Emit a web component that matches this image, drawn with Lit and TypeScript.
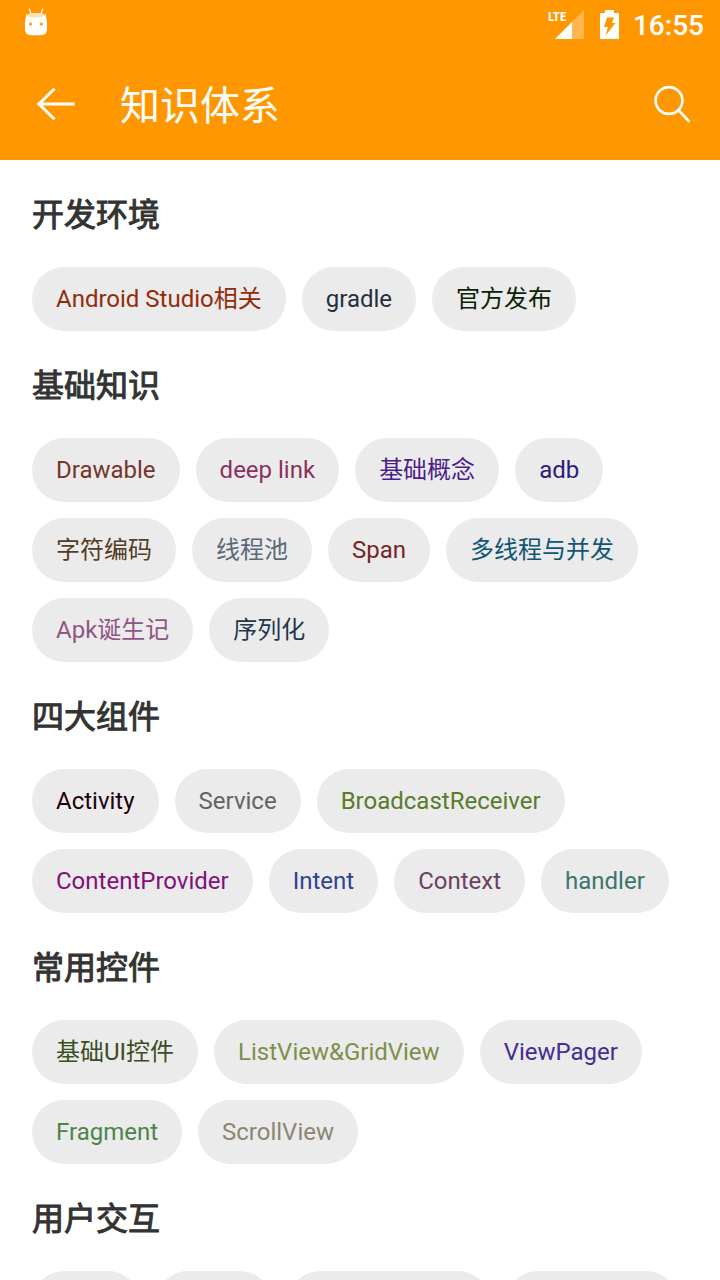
import { LitElement, html, css, svg } from "lit";
import { customElement, property } from "lit/decorators.js";
import { styleMap } from "lit/directives/style-map.js";

interface Tag {
  label: string;
  color: string;
}

interface Section {
  title: string;
  tags: Tag[];
}

const SECTIONS: Section[] = [
  {
    title: "开发环境",
    tags: [
      { label: "Android Studio相关", color: "#932b0a" },
      { label: "gradle", color: "#25303f" },
      { label: "官方发布", color: "#0c2003" },
    ],
  },
  {
    title: "基础知识",
    tags: [
      { label: "Drawable", color: "#76342a" },
      { label: "deep link", color: "#8b2f63" },
      { label: "基础概念", color: "#4b1d8f" },
      { label: "adb", color: "#2d1a7d" },
      { label: "字符编码", color: "#543c25" },
      { label: "线程池", color: "#5b6978" },
      { label: "Span", color: "#782428" },
      { label: "多线程与并发", color: "#105574" },
      { label: "Apk诞生记", color: "#905584" },
      { label: "序列化", color: "#1f3750" },
    ],
  },
  {
    title: "四大组件",
    tags: [
      { label: "Activity", color: "#1e0210" },
      { label: "Service", color: "#5f6468" },
      { label: "BroadcastReceiver", color: "#587c2a" },
      { label: "ContentProvider", color: "#830f7c" },
      { label: "Intent", color: "#2f4194" },
      { label: "Context", color: "#6b4162" },
      { label: "handler", color: "#39756c" },
    ],
  },
  {
    title: "常用控件",
    tags: [
      { label: "基础UI控件", color: "#3c4d1d" },
      { label: "ListView&GridView", color: "#7d9049" },
      { label: "ViewPager", color: "#432f95" },
      { label: "Fragment", color: "#4b8648" },
      { label: "ScrollView", color: "#8e8571" },
    ],
  },
  {
    title: "用户交互",
    tags: [
      { label: "Toast", color: "#5b6978" },
      { label: "Dialog", color: "#543c25" },
      { label: "PopupWindow", color: "#2f4194" },
      { label: "Notification", color: "#39756c" },
    ],
  },
];

const mascotIcon = svg`
  <svg class="icon" width="24" height="28" viewBox="0 0 24 28" aria-hidden="true">
    <path d="M5.4 1 L6.8 6 M18.6 1 L17.2 6" stroke="#fff" stroke-width="1.2" fill="none" stroke-linecap="round"/>
    <path d="M2.4 6.6 Q12 3.6 21.6 6.6 Q23.8 14 23 22 Q22.6 26.2 19 26.8 Q12 27.8 5 26.8 Q1.4 26.2 1 22 Q0.2 14 2.4 6.6Z" fill="#fff"/>
    <path d="M2.6 6.8 Q12 3.6 21.4 6.8 Q20.8 9.2 17 9.2 Q12 10 7 9.2 Q3.2 9.2 2.6 6.8Z" fill="#ffdfb3"/>
    <circle cx="6.5" cy="16" r="1.5" fill="#ff9800"/>
    <circle cx="17.5" cy="16" r="1.5" fill="#ff9800"/>
  </svg>`;

const signalIcon = svg`
  <svg class="signal-shape" width="29" height="29" viewBox="0 0 29 29" aria-hidden="true">
    <path d="M29 0V29H0Z" fill="#fff" fill-opacity=".3"/>
    <path d="M17 12V29H0Z" fill="#fff"/>
  </svg>`;

const batteryIcon = svg`
  <svg class="icon" width="19" height="29" viewBox="0 0 19 29" aria-hidden="true">
    <path d="M5 0H14V3H19V29H0V3H5Z" fill="#fff"/>
    <path d="M7 7.5H14L12 13H15.5L5.5 25.5L8 17H4Z" fill="#ff9800"/>
  </svg>`;

const backIcon = svg`
  <svg class="icon" width="40" height="40" viewBox="0 0 40 40" aria-hidden="true">
    <path d="M38.5 20H3 M18.5 4.8L3 20L18.5 35.2" fill="none" stroke="#fff" stroke-width="3"/>
  </svg>`;

const searchIcon = svg`
  <svg class="icon" width="40" height="40" viewBox="0 0 40 40" aria-hidden="true">
    <circle cx="17" cy="16.5" r="13.4" fill="none" stroke="#fff" stroke-width="2.6"/>
    <path d="M26.4 26.1L36.6 36.9" stroke="#fff" stroke-width="2.8" stroke-linecap="round"/>
  </svg>`;

@customElement("status-bar")
export class StatusBar extends LitElement {
  static styles = css`
    :host {
      display: flex;
      align-items: center;
      height: 48px;
      padding: 0 16px 0 24px;
      color: #fff;
      font-family: Roboto, sans-serif;
    }
    .icon {
      display: block;
    }
    .notifications {
      flex: 1;
      padding-bottom: 4px;
    }
    .system {
      display: flex;
      align-items: center;
    }
    .signal {
      display: grid;
      width: 36px;
      margin-right: 16px;
    }
    .signal-shape {
      grid-area: 1 / 1;
      justify-self: end;
    }
    .network {
      grid-area: 1 / 1;
      font: 700 13px/13px "Roboto Condensed", "Open Sans Condensed", "Liberation Sans Narrow", Roboto, sans-serif;
    }
    .time {
      margin-left: 14px;
      font-size: 28px;
      font-weight: 500;
      line-height: 32px;
      padding-top: 4px;
    }
  `;

  render() {
    return html`
      <div class="notifications">${mascotIcon}</div>
      <div class="system">
        <div class="signal">${signalIcon}<span class="network">LTE</span></div>
        ${batteryIcon}
        <time class="time">16:55</time>
      </div>
    `;
  }
}

@customElement("app-bar")
export class AppBar extends LitElement {
  @property() heading = "";

  static styles = css`
    :host {
      display: flex;
      align-items: center;
      height: 112px;
      padding: 0 28px 0 36px;
      color: #fff;
    }
    .icon {
      display: block;
    }
    .action {
      padding: 0;
      border: 0;
      background: none;
      cursor: pointer;
    }
    .title {
      flex: 1;
      margin: 0 0 0 44px;
      padding-top: 6px;
      font-family: Roboto, "Noto Sans CJK SC", sans-serif;
      font-size: 40px;
      font-weight: 400;
      line-height: 48px;
    }
  `;

  render() {
    return html`
      <button class="action" aria-label="返回">${backIcon}</button>
      <h1 class="title">${this.heading}</h1>
      <button class="action" aria-label="搜索">${searchIcon}</button>
    `;
  }
}

@customElement("tag-section")
export class TagSection extends LitElement {
  @property({ attribute: false }) section!: Section;

  static styles = css`
    :host {
      display: block;
      padding: 0 32px;
      font-family: Roboto, "Noto Sans CJK SC", sans-serif;
    }
    .title {
      margin: 0;
      padding: 34px 0 30px;
      color: #333;
      font-size: 32px;
      font-weight: 400;
      line-height: 43px;
      -webkit-text-stroke: 1px currentColor;
    }
    .tags {
      display: flex;
      flex-wrap: wrap;
      gap: 16px;
    }
    .tag {
      height: 64px;
      padding: 0 24px;
      border: 0;
      border-radius: 32px;
      background: #ebebeb;
      font-family: inherit;
      font-size: 24px;
      line-height: 32px;
      white-space: nowrap;
      cursor: pointer;
    }
  `;

  render() {
    return html`
      <h2 class="title">${this.section.title}</h2>
      <div class="tags">
        ${this.section.tags.map(
          (tag) => html`<button class="tag" style=${styleMap({ color: tag.color })}>${tag.label}</button>`
        )}
      </div>
    `;
  }
}

@customElement("app-root")
export class AppRoot extends LitElement {
  static styles = css`
    :host {
      display: flex;
      flex-direction: column;
      height: 100vh;
      background: #fff;
    }
    .header {
      flex: none;
      background: #ff9800;
    }
    .content {
      flex: 1;
      min-height: 0;
      overflow-y: auto;
      scrollbar-width: none;
    }
  `;

  render() {
    return html`
      <header class="header">
        <status-bar></status-bar>
        <app-bar heading="知识体系"></app-bar>
      </header>
      <main class="content">
        ${SECTIONS.map((section) => html`<tag-section .section=${section}></tag-section>`)}
      </main>
    `;
  }
}
